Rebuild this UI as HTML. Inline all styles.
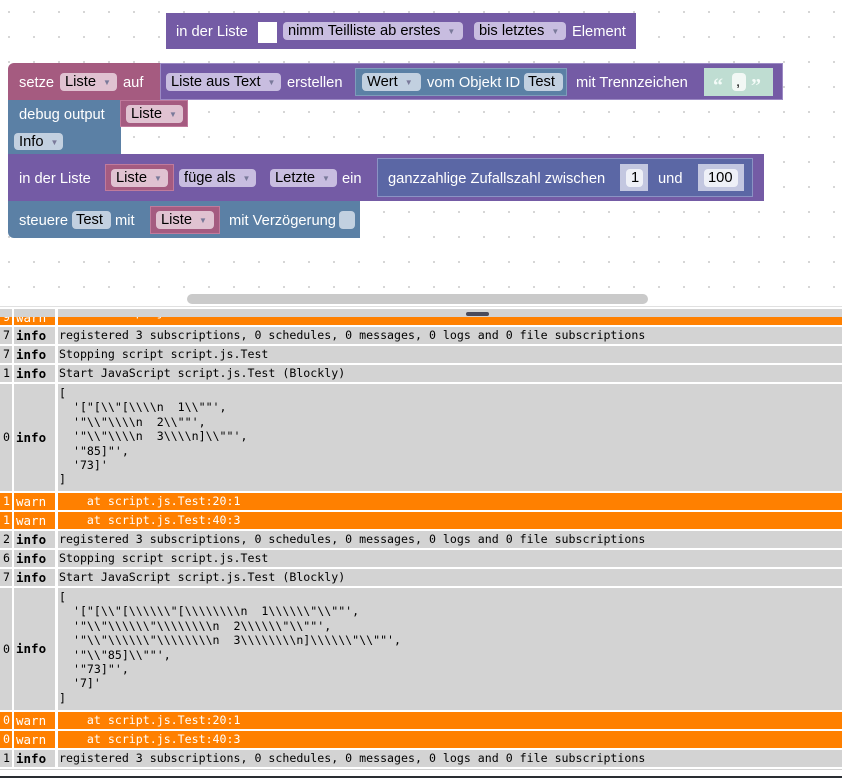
<!DOCTYPE html>
<html><head><meta charset="utf-8"><style>
*{margin:0;padding:0;box-sizing:border-box}
body{width:842px;height:778px;overflow:hidden;background:#fff;position:relative;font-family:"Liberation Sans",Arial,sans-serif;font-size:14.7px}
.ws{position:absolute;left:0;top:0;width:842px;height:306px;background-color:#fff;background-image:radial-gradient(circle,#c8c8c8 0.8px,transparent 1px);background-size:25px 25px;background-position:-3.5px -0.5px}
.b{position:absolute}
.t{position:absolute;color:#fff;line-height:20px;white-space:nowrap}
.f{position:absolute;border-radius:4px;line-height:19px;height:18px;color:#000;padding-left:5px;white-space:nowrap;overflow:hidden}
.f i{font-style:normal;font-size:8px;color:#7a7a9a;margin-left:7px;vertical-align:1px}
.pu{background:#745ba5}
.re{background:#a55b80}
.bl{background:#5b80a5}
.fp{background:#c8bde0}
.fr{background:#e0c2d1}
.fb{background:#c2d0e0}
.log{position:absolute;left:0;width:842px;font-family:"DejaVu Sans Mono","Liberation Mono",monospace;font-size:11.6px}
.c{position:absolute;top:0;bottom:0;overflow:hidden}
.c1{left:0;width:12px;text-align:right;padding-right:2px}
.c2{left:14px;width:41px;font-weight:bold;padding-left:2px;font-size:12.5px}
.c3{left:58px;right:0;padding-left:1px;white-space:pre}
.g .c{background:#d3d3d3;color:#000}
.o .c{background:#ff8000;color:#fff;font-weight:normal}
.one .c{line-height:17px}
.big .c3{line-height:14.4px;padding-top:2px}
</style></head><body>
<div class="ws"></div>

<div class="b pu" style="left:166px;top:13px;width:470px;height:36px"></div>
<div class="t" style="left:176px;top:22px">in der Liste</div>
<div class="b" style="left:258px;top:22px;width:19px;height:21px;background:#fff"></div>
<div class="f fp" style="left:283px;top:22px;width:180px">nimm Teilliste ab erstes<i>▼</i></div>
<div class="f fp" style="left:474px;top:22px;width:92px">bis letztes<i>▼</i></div>
<div class="t" style="left:572px;top:22px">Element</div>

<div class="b re" style="left:8px;top:63px;width:156px;height:37px;border-radius:6px 0 0 0"></div>
<div class="t" style="left:19px;top:73px">setze</div>
<div class="f fr" style="left:60px;top:73px;width:57px">Liste<i>▼</i></div>
<div class="t" style="left:123px;top:73px">auf</div>
<div class="b pu" style="left:160px;top:63px;width:623px;height:37px;border:1px solid #9c8ac4"></div>
<div class="f fp" style="left:166px;top:73px;width:115px">Liste aus Text<i>▼</i></div>
<div class="t" style="left:287px;top:73px">erstellen</div>
<div class="b bl" style="left:355px;top:68px;width:212px;height:28px;border:1px solid #7f9cbb"></div>
<div class="f fb" style="left:362px;top:73px;width:59px">Wert<i>▼</i></div>
<div class="t" style="left:427px;top:73px">vom Objekt ID</div>
<div class="f fb" style="left:524px;top:73px;width:39px;padding-left:4px">Test</div>
<div class="t" style="left:576px;top:73px">mit Trennzeichen</div>
<div class="b" style="left:704px;top:68px;width:69px;height:28px;background:#bfddd2"></div>
<div class="t" style="left:713px;top:76px;font-weight:bold;color:#f4fbf8;font-size:20px;font-family:'Liberation Serif',serif">“</div>
<div class="f" style="left:732px;top:73px;width:14px;background:#f2f8f5;padding-left:4px">,</div>
<div class="t" style="left:751px;top:76px;font-weight:bold;color:#f4fbf8;font-size:20px;font-family:'Liberation Serif',serif">”</div>

<div class="b bl" style="left:8px;top:100px;width:113px;height:54px"></div>
<div class="t" style="left:19px;top:105px">debug output</div>
<div class="b re" style="left:120px;top:100px;width:68px;height:27px;border:1px solid #c07a9c"></div>
<div class="f fr" style="left:126px;top:105px;width:57px">Liste<i>▼</i></div>
<div class="f fb" style="left:14px;top:133px;width:49px;height:17px;line-height:18px">Info<i>▼</i></div>

<div class="b pu" style="left:8px;top:154px;width:756px;height:47px"></div>
<div class="t" style="left:19px;top:169px">in der Liste</div>
<div class="b re" style="left:105px;top:164px;width:69px;height:27px;border:1px solid #c07a9c"></div>
<div class="f fr" style="left:111px;top:169px;width:57px">Liste<i>▼</i></div>
<div class="f fp" style="left:179px;top:169px;width:77px">füge als<i>▼</i></div>
<div class="f fp" style="left:270px;top:169px;width:67px">Letzte<i>▼</i></div>
<div class="t" style="left:342px;top:169px">ein</div>
<div class="b" style="left:377px;top:158px;width:376px;height:39px;background:#5b67a5;border:1px solid #8b93c4"></div>
<div class="t" style="left:388px;top:169px">ganzzahlige Zufallszahl zwischen</div>
<div class="b" style="left:620px;top:164px;width:28px;height:27px;background:#c3c7e0"></div>
<div class="f" style="left:626px;top:169px;width:17px;background:#eef0f7">1</div>
<div class="t" style="left:658px;top:169px">und</div>
<div class="b" style="left:698px;top:164px;width:46px;height:27px;background:#c3c7e0"></div>
<div class="f" style="left:704px;top:169px;width:34px;background:#eef0f7;padding-left:4px">100</div>

<div class="b bl" style="left:8px;top:201px;width:352px;height:37px;border-radius:0 0 0 6px"></div>
<div class="t" style="left:19px;top:211px">steuere</div>
<div class="f fb" style="left:72px;top:211px;width:39px;padding-left:4px">Test</div>
<div class="t" style="left:115px;top:211px">mit</div>
<div class="b re" style="left:150px;top:206px;width:70px;height:28px;border:1px solid #c07a9c"></div>
<div class="f fr" style="left:156px;top:211px;width:58px">Liste<i>▼</i></div>
<div class="t" style="left:229px;top:211px">mit Verzögerung</div>
<div class="b fb" style="left:339px;top:211px;width:16px;height:18px;border-radius:4px"></div>

<div class="b" style="left:187px;top:294px;width:461px;height:10px;border-radius:5px;background:#cacaca"></div>
<div class="b" style="left:0;top:306px;width:842px;height:1px;background:#e0e0e0"></div>

<div class="log o one" style="top:309px;height:16px"><div class="c c1">9</div><div class="c c2">warn</div><div class="c c3" style="line-height:6px">    at script.js.Test:40:3</div></div>
<div class="b" style="left:0;top:309px;width:12px;height:8px;background:#d3d3d3"></div>
<div class="b" style="left:14px;top:309px;width:41px;height:8px;background:#d3d3d3"></div>
<div class="b" style="left:58px;top:309px;width:784px;height:8px;background:#d3d3d3"></div>
<div class="b" style="left:466px;top:312px;width:23px;height:4px;border-radius:2px;background:#4a4a5a"></div>

<div class="log g one" style="top:327px;height:17px"><div class="c c1">7</div><div class="c c2">info</div><div class="c c3">registered 3 subscriptions, 0 schedules, 0 messages, 0 logs and 0 file subscriptions</div></div>
<div class="log g one" style="top:346px;height:17px"><div class="c c1">7</div><div class="c c2">info</div><div class="c c3">Stopping script script.js.Test</div></div>
<div class="log g one" style="top:365px;height:17px"><div class="c c1">1</div><div class="c c2">info</div><div class="c c3">Start JavaScript script.js.Test (Blockly)</div></div>
<div class="log g big" style="top:384px;height:107px"><div class="c c1" style="line-height:107px">0</div><div class="c c2" style="line-height:107px">info</div><div class="c c3">[
  '["[\\"[\\\\n  1\\""',
  '"\\"\\\\n  2\\""',
  '"\\"\\\\n  3\\\\n]\\""',
  '"85]"',
  '73]'
]</div></div>
<div class="log o one" style="top:493px;height:17px"><div class="c c1">1</div><div class="c c2">warn</div><div class="c c3">    at script.js.Test:20:1</div></div>
<div class="log o one" style="top:512px;height:17px"><div class="c c1">1</div><div class="c c2">warn</div><div class="c c3">    at script.js.Test:40:3</div></div>
<div class="log g one" style="top:531px;height:17px"><div class="c c1">2</div><div class="c c2">info</div><div class="c c3">registered 3 subscriptions, 0 schedules, 0 messages, 0 logs and 0 file subscriptions</div></div>
<div class="log g one" style="top:550px;height:17px"><div class="c c1">6</div><div class="c c2">info</div><div class="c c3">Stopping script script.js.Test</div></div>
<div class="log g one" style="top:569px;height:17px"><div class="c c1">7</div><div class="c c2">info</div><div class="c c3">Start JavaScript script.js.Test (Blockly)</div></div>
<div class="log g big" style="top:588px;height:122px"><div class="c c1" style="line-height:122px">0</div><div class="c c2" style="line-height:122px">info</div><div class="c c3">[
  '["[\\"[\\\\\\"[\\\\\\\\n  1\\\\\\"\\""',
  '"\\"\\\\\\"\\\\\\\\n  2\\\\\\"\\""',
  '"\\"\\\\\\"\\\\\\\\n  3\\\\\\\\n]\\\\\\"\\""',
  '"\\"85]\\""',
  '"73]"',
  '7]'
]</div></div>
<div class="log o one" style="top:712px;height:17px"><div class="c c1">0</div><div class="c c2">warn</div><div class="c c3">    at script.js.Test:20:1</div></div>
<div class="log o one" style="top:731px;height:17px"><div class="c c1">0</div><div class="c c2">warn</div><div class="c c3">    at script.js.Test:40:3</div></div>
<div class="log g one" style="top:750px;height:17px"><div class="c c1">1</div><div class="c c2">info</div><div class="c c3">registered 3 subscriptions, 0 schedules, 0 messages, 0 logs and 0 file subscriptions</div></div>
<div class="b" style="left:0;top:769px;width:842px;height:1px;background:#d0d0d0"></div>
<div class="b" style="left:0;top:776px;width:842px;height:2px;background:#2a2e33"></div>
</body></html>
